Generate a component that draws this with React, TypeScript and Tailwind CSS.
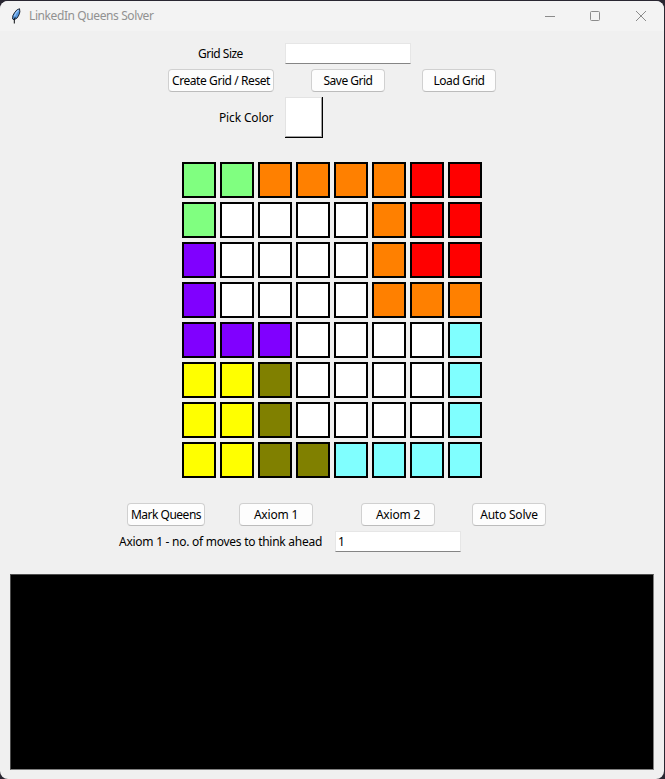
import React from "react";

const fills: Record<string, string> = {
  G: "bg-[#80ff80]",
  O: "bg-[#ff8000]",
  R: "bg-[#ff0000]",
  W: "bg-white",
  P: "bg-[#8000ff]",
  Y: "bg-[#ffff00]",
  V: "bg-[#808000]",
  C: "bg-[#80ffff]",
};

const board = [
  "GGOOOORR",
  "GWWWWORR",
  "PWWWWORR",
  "PWWWWOOO",
  "PPPWWWWC",
  "YYVWWWWC",
  "YYVWWWWC",
  "YYVVCCCC",
];

function Label({ className, children }: { className: string; children: React.ReactNode }) {
  return <span className={`block shrink-0 whitespace-nowrap ${className}`}>{children}</span>;
}

function Button({ className, text, children }: { className: string; text: string; children: React.ReactNode }) {
  return (
    <button
      className={`flex h-[23px] shrink-0 items-center justify-center whitespace-nowrap rounded-[4px] border border-[#d0d0d0] border-b-[#bcbcbc] bg-[#fdfdfd] ${className}`}
    >
      <span className={text}>{children}</span>
    </button>
  );
}

function Entry({ value }: { value?: string }) {
  return (
    <div className="flex h-[21px] w-[126px] shrink-0 items-center border border-[#e6e6e6] border-b-[#858585] bg-white pl-[2px]">
      {value}
    </div>
  );
}

function Feather() {
  return (
    <svg className="ml-[10px] h-[16px] w-[12px] shrink-0" viewBox="0 0 12 16">
      <path d="M9.5 .7 6.7 2.1 4.4 4.9 2.8 7.8 2.6 11 4.2 11.8 7.2 9.9 8.9 7 9.9 3.8Z" fill="#5596dc" stroke="#111722" strokeWidth=".9" />
      <path d="M8.6 2 6.2 4.6 4.4 8.3" fill="none" stroke="#9cc8fa" strokeWidth="1.2" />
      <path d="M5.2 9.3 4.3 11.5V15.5" fill="none" stroke="#080a0e" strokeWidth="1" />
    </svg>
  );
}

export default function App() {
  return (
    <div className="h-[779px] w-[665px] overflow-hidden bg-[#292631] pt-px pr-px font-['Noto_Sans','Open_Sans',sans-serif] text-[12px] leading-[16px] text-black">
      <div className="flex h-[778px] w-[664px] flex-col overflow-hidden rounded-[8px] bg-[#f0f0f0]">
        <header className="flex h-[30px] shrink-0 items-center bg-[#f3f3f3] text-[#919191]">
          <Feather />
          <span className="ml-[7px] whitespace-nowrap tracking-[-0.4px]">LinkedIn Queens Solver</span>
          <svg className="mr-[17px] ml-auto h-[12px] w-[103px]" viewBox="0 0 103 12" fill="none" stroke="#8b8b8b">
            <path d="M1 6.5h10" />
            <rect x="46.5" y="1.5" width="9" height="9" rx="1" />
            <path d="m92 1 10 10m0-10L92 11" />
          </svg>
        </header>

        <section className="mt-[12px] flex h-[21px] shrink-0 items-center">
          <Label className="ml-[198px] w-[87px] tracking-[-0.5px]">Grid Size</Label>
          <Entry />
        </section>

        <section className="mt-[5px] flex shrink-0">
          <Button className="ml-[168px] w-[106px]" text="tracking-[-0.42px]">Create Grid / Reset</Button>
          <Button className="ml-[37px] w-[74px]" text="tracking-[-0.5px]">Save Grid</Button>
          <Button className="ml-[37px] w-[74px]" text="tracking-[-0.42px]">Load Grid</Button>
        </section>

        <section className="mt-[5px] flex h-[41px] shrink-0 items-center">
          <Label className="ml-[219px] w-[66px] tracking-[-0.15px]">Pick Color</Label>
          <div className="h-[41px] w-[38px] border-r border-b border-black">
            <div className="h-full w-full border border-[#e3e3e3] border-r-[#a0a0a0] border-b-[#a0a0a0] bg-white" />
          </div>
        </section>

        <section className="mt-[24px] ml-[182px] grid w-[300px] shrink-0 grid-cols-8 gap-1">
          {board.flatMap((row, y) =>
            row.split("").map((cell, x) => (
              <div key={`${x}-${y}`} className={`h-[36px] w-[34px] border-2 border-black ${fills[cell]}`} />
            )),
          )}
        </section>

        <section className="mt-[25px] flex shrink-0">
          <Button className="ml-[127px] w-[78px]" text="tracking-[-0.5px]">Mark Queens</Button>
          <Button className="ml-[34px] w-[74px]" text="tracking-[-0.2px]">Axiom 1</Button>
          <Button className="ml-[48px] w-[74px]" text="tracking-[-0.2px]">Axiom 2</Button>
          <Button className="ml-[37px] w-[74px]" text="tracking-[-0.2px]">Auto Solve</Button>
        </section>

        <section className="mt-[5px] flex h-[21px] shrink-0 items-center">
          <Label className="ml-[119px] w-[216px] tracking-[-0.26px]">Axiom 1 - no. of moves to think ahead</Label>
          <Entry value="1" />
        </section>

        <section className="mt-[22px] ml-[10px] h-[196px] w-[644px] shrink-0 border border-[#4d4d4d] border-r-[#808080] border-b-[#808080] bg-black" />
      </div>
    </div>
  );
}
